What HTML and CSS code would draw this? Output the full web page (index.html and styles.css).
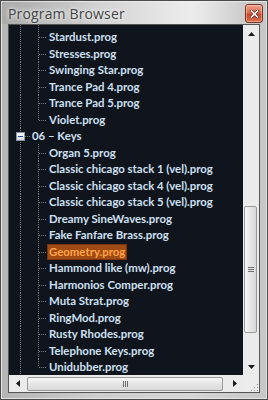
FILE: index.html
```html
<!DOCTYPE html>
<html>
  <head>
    <title>Program Browser</title>
    <link rel="stylesheet" href="styles.css">
  </head>
  <body>
    <div class="window">
      <div class="titlebar">
        <span class="title">Program Browser</span>
        <button class="close" title="Close">
          <svg width="9" height="8" viewBox="0 0 9 8">
            <path d="M1.5 1 L7.5 7 M7.5 1 L1.5 7" stroke="#5a2416" stroke-width="3" stroke-linecap="square"/>
            <path d="M1.5 1 L7.5 7 M7.5 1 L1.5 7" stroke="#ffffff" stroke-width="1.6" stroke-linecap="square"/>
          </svg>
        </button>
      </div>

      <div class="client">
        <div class="view">
          <div class="tree">
            <div class="row stub"><span class="guide"></span><span class="branch"></span></div>
            <div class="row"><span class="guide"></span><span class="branch"></span><span class="label">Stardust.prog</span></div>
            <div class="row"><span class="guide"></span><span class="branch"></span><span class="label">Stresses.prog</span></div>
            <div class="row"><span class="guide"></span><span class="branch"></span><span class="label">Swinging Star.prog</span></div>
            <div class="row"><span class="guide"></span><span class="branch"></span><span class="label">Trance Pad 4.prog</span></div>
            <div class="row"><span class="guide"></span><span class="branch"></span><span class="label">Trance Pad 5.prog</span></div>
            <div class="row"><span class="guide"></span><span class="branch last"></span><span class="label">Violet.prog</span></div>

            <div class="row group">
              <span class="guide"><span class="toggle"></span></span>
              <span class="label">06 – Keys</span>
            </div>

            <div class="row"><span class="guide"></span><span class="branch"></span><span class="label">Organ 5.prog</span></div>
            <div class="row"><span class="guide"></span><span class="branch"></span><span class="label">Classic chicago stack 1 (vel).prog</span></div>
            <div class="row"><span class="guide"></span><span class="branch"></span><span class="label">Classic chicago stack 4 (vel).prog</span></div>
            <div class="row"><span class="guide"></span><span class="branch"></span><span class="label">Classic chicago stack 5 (vel).prog</span></div>
            <div class="row"><span class="guide"></span><span class="branch"></span><span class="label">Dreamy SineWaves.prog</span></div>
            <div class="row"><span class="guide"></span><span class="branch"></span><span class="label">Fake Fanfare Brass.prog</span></div>
            <div class="row"><span class="guide"></span><span class="branch"></span><span class="label selected">Geometry.prog</span></div>
            <div class="row"><span class="guide"></span><span class="branch"></span><span class="label">Hammond like (mw).prog</span></div>
            <div class="row"><span class="guide"></span><span class="branch"></span><span class="label">Harmonios Comper.prog</span></div>
            <div class="row"><span class="guide"></span><span class="branch"></span><span class="label">Muta Strat.prog</span></div>
            <div class="row"><span class="guide"></span><span class="branch"></span><span class="label">RingMod.prog</span></div>
            <div class="row"><span class="guide"></span><span class="branch"></span><span class="label">Rusty Rhodes.prog</span></div>
            <div class="row"><span class="guide"></span><span class="branch"></span><span class="label">Telephone Keys.prog</span></div>
            <div class="row"><span class="guide"></span><span class="branch last"></span><span class="label">Unidubber.prog</span></div>
          </div>

          <div class="vscroll">
            <div class="sbtn">
              <svg width="7" height="4" viewBox="0 0 7 4"><polygon points="3.5,0 7,4 0,4" fill="#1a1a1a"/></svg>
            </div>
            <div class="vtrack">
              <div class="vthumb"><span class="grip-lines"></span></div>
            </div>
            <div class="sbtn">
              <svg width="7" height="4" viewBox="0 0 7 4"><polygon points="0,0 7,0 3.5,4" fill="#1a1a1a"/></svg>
            </div>
          </div>
        </div>

        <div class="hbar">
          <div class="hscroll">
            <div class="sbtn">
              <svg width="4" height="7" viewBox="0 0 4 7"><polygon points="4,0 4,7 0,3.5" fill="#1a1a1a"/></svg>
            </div>
            <div class="htrack">
              <div class="hthumb"><span class="grip-lines"></span></div>
            </div>
            <div class="sbtn">
              <svg width="4" height="7" viewBox="0 0 4 7"><polygon points="0,0 4,3.5 0,7" fill="#1a1a1a"/></svg>
            </div>
          </div>
          <div class="sizegrip">
            <svg width="10" height="10" viewBox="0 0 10 10">
              <g fill="#8a8a8a">
                <rect x="8" y="2" width="1" height="1"/>
                <rect x="5" y="5" width="1" height="1"/><rect x="8" y="5" width="1" height="1"/>
                <rect x="2" y="8" width="1" height="1"/><rect x="5" y="8" width="1" height="1"/><rect x="8" y="8" width="1" height="1"/>
              </g>
            </svg>
          </div>
        </div>
      </div>
    </div>
  </body>
</html>
```

FILE: styles.css
```css
body {
  margin: 0;
  background: #ffffff;
}

.window {
  width: 268px;
  height: 400px;
  box-sizing: border-box;
  border: 1px solid #4a4a4a;
  display: flex;
  flex-direction: column;
  background: linear-gradient(to right, #b4b4b4, #cdcdcd 35%, #d6d6d6 70%, #c6c6c6);
  box-shadow: inset 1px 1px 0 #e6e6e6, inset -1px -1px 0 #e2e2e2;
}

.titlebar {
  height: 23px;
  flex: none;
  display: flex;
  align-items: flex-start;
  background: linear-gradient(to right, rgba(0, 0, 0, 0.06), rgba(0, 0, 0, 0) 30%, rgba(255, 255, 255, 0.55) 72%, rgba(255, 255, 255, 0) 92%);
}

.title {
  margin: 3px 0 0 7px;
  font: 14px "Open Sans", sans-serif;
  letter-spacing: 0.15px;
  color: #444444;
  text-shadow: 0 0 6px #f4f4f4, 0 0 3px #f0f0f0;
}

.close {
  margin: 3px 4px 0 auto;
  width: 18px;
  height: 19px;
  padding: 0;
  box-sizing: border-box;
  border: 1px solid #7a3422;
  border-radius: 3px;
  background: linear-gradient(#eea48e, #dc6a4e 45%, #c9472c 55%, #dd7050);
  box-shadow: inset 0 0 0 1px rgba(255, 255, 255, 0.35);
  display: flex;
  align-items: center;
  justify-content: center;
}

.client {
  flex: 1;
  margin: 0 7px 6px;
  border: 1px solid #555555;
  display: flex;
  flex-direction: column;
  background: #ececec;
}

.view {
  height: 350px;
  display: flex;
}

/* tree */
.tree {
  flex: 1;
  overflow: hidden;
  background: #10141c;
  font: bold 11.4px Lato, sans-serif;
  color: #cfe0f3;
}

.row {
  height: 16.5px;
  display: flex;
  align-items: center;
  white-space: nowrap;
}

.row.stub {
  height: 3.75px;
}

.guide,
.branch {
  position: relative;
  align-self: stretch;
  flex: none;
}

.guide {
  width: 20px;
}

.branch {
  width: 18px;
}

.guide::before,
.branch::before {
  content: "";
  position: absolute;
  top: 0;
  bottom: 0;
  width: 1px;
  background: repeating-linear-gradient(#7c7c7c 0 1px, transparent 1px 2px);
}

.guide::before {
  left: 11px;
}

.branch::before {
  left: 9px;
}

.branch.last::before {
  bottom: 50%;
}

.branch::after {
  content: "";
  position: absolute;
  left: 10px;
  top: 50%;
  width: 8px;
  height: 1px;
  background: repeating-linear-gradient(to right, #7c7c7c 0 1px, transparent 1px 2px);
}

.stub .branch::after {
  display: none;
}

.group .guide::after {
  content: "";
  position: absolute;
  left: 16px;
  top: 50%;
  width: 5px;
  height: 1px;
  background: repeating-linear-gradient(to right, #7c7c7c 0 1px, transparent 1px 2px);
}

.toggle {
  position: absolute;
  left: 7px;
  top: 4px;
  width: 9px;
  height: 9px;
  box-sizing: border-box;
  border: 1px solid #8a96a8;
  background: linear-gradient(#ffffff, #d8dce4);
  z-index: 1;
}

.toggle::after {
  content: "";
  position: absolute;
  left: 1px;
  top: 3px;
  width: 5px;
  height: 1px;
  background: #1c4aa6;
}

.label {
  height: 16px;
  line-height: 16px;
  padding: 0 2px;
  box-sizing: border-box;
}

.group .label {
  margin-left: 1px;
}

.label.selected {
  background: #a24a14;
  color: #ffa448;
  box-shadow: inset 0 0 0 1px #7a3208;
}

/* scrollbars */
.vscroll {
  width: 16px;
  flex: none;
  display: flex;
  flex-direction: column;
  background: #ebebeb;
}

.sbtn {
  width: 16px;
  height: 17px;
  flex: none;
  display: flex;
  align-items: center;
  justify-content: center;
}

.vtrack {
  flex: 1;
}

.vthumb {
  margin: 164px 0 0 1px;
  width: 13px;
  height: 127px;
  box-sizing: border-box;
  border: 1px solid #9a9a9a;
  border-radius: 2px;
  background: linear-gradient(to right, #f6f6f6, #e6e6e6 50%, #d8d8d8);
  display: flex;
  align-items: center;
  justify-content: center;
}

.vthumb .grip-lines {
  width: 6px;
  height: 5px;
  background: repeating-linear-gradient(#6e6e6e 0 1px, transparent 1px 2px);
}

.hbar {
  flex: 1;
  display: flex;
}

.hscroll {
  flex: 1;
  display: flex;
  background: #ebebeb;
}

.hscroll .sbtn {
  width: 17px;
  height: auto;
}

.htrack {
  flex: 1;
  display: flex;
  align-items: center;
}

.hthumb {
  margin-left: 1px;
  width: 196px;
  height: 14px;
  box-sizing: border-box;
  border: 1px solid #9a9a9a;
  border-radius: 2px;
  background: linear-gradient(#f6f6f6, #e6e6e6 50%, #d8d8d8);
  display: flex;
  align-items: center;
  justify-content: center;
}

.hthumb .grip-lines {
  width: 5px;
  height: 6px;
  background: repeating-linear-gradient(to right, #6e6e6e 0 1px, transparent 1px 2px);
}

.sizegrip {
  width: 16px;
  flex: none;
  display: flex;
  align-items: flex-end;
  justify-content: flex-end;
  background: #ececec;
}
```
